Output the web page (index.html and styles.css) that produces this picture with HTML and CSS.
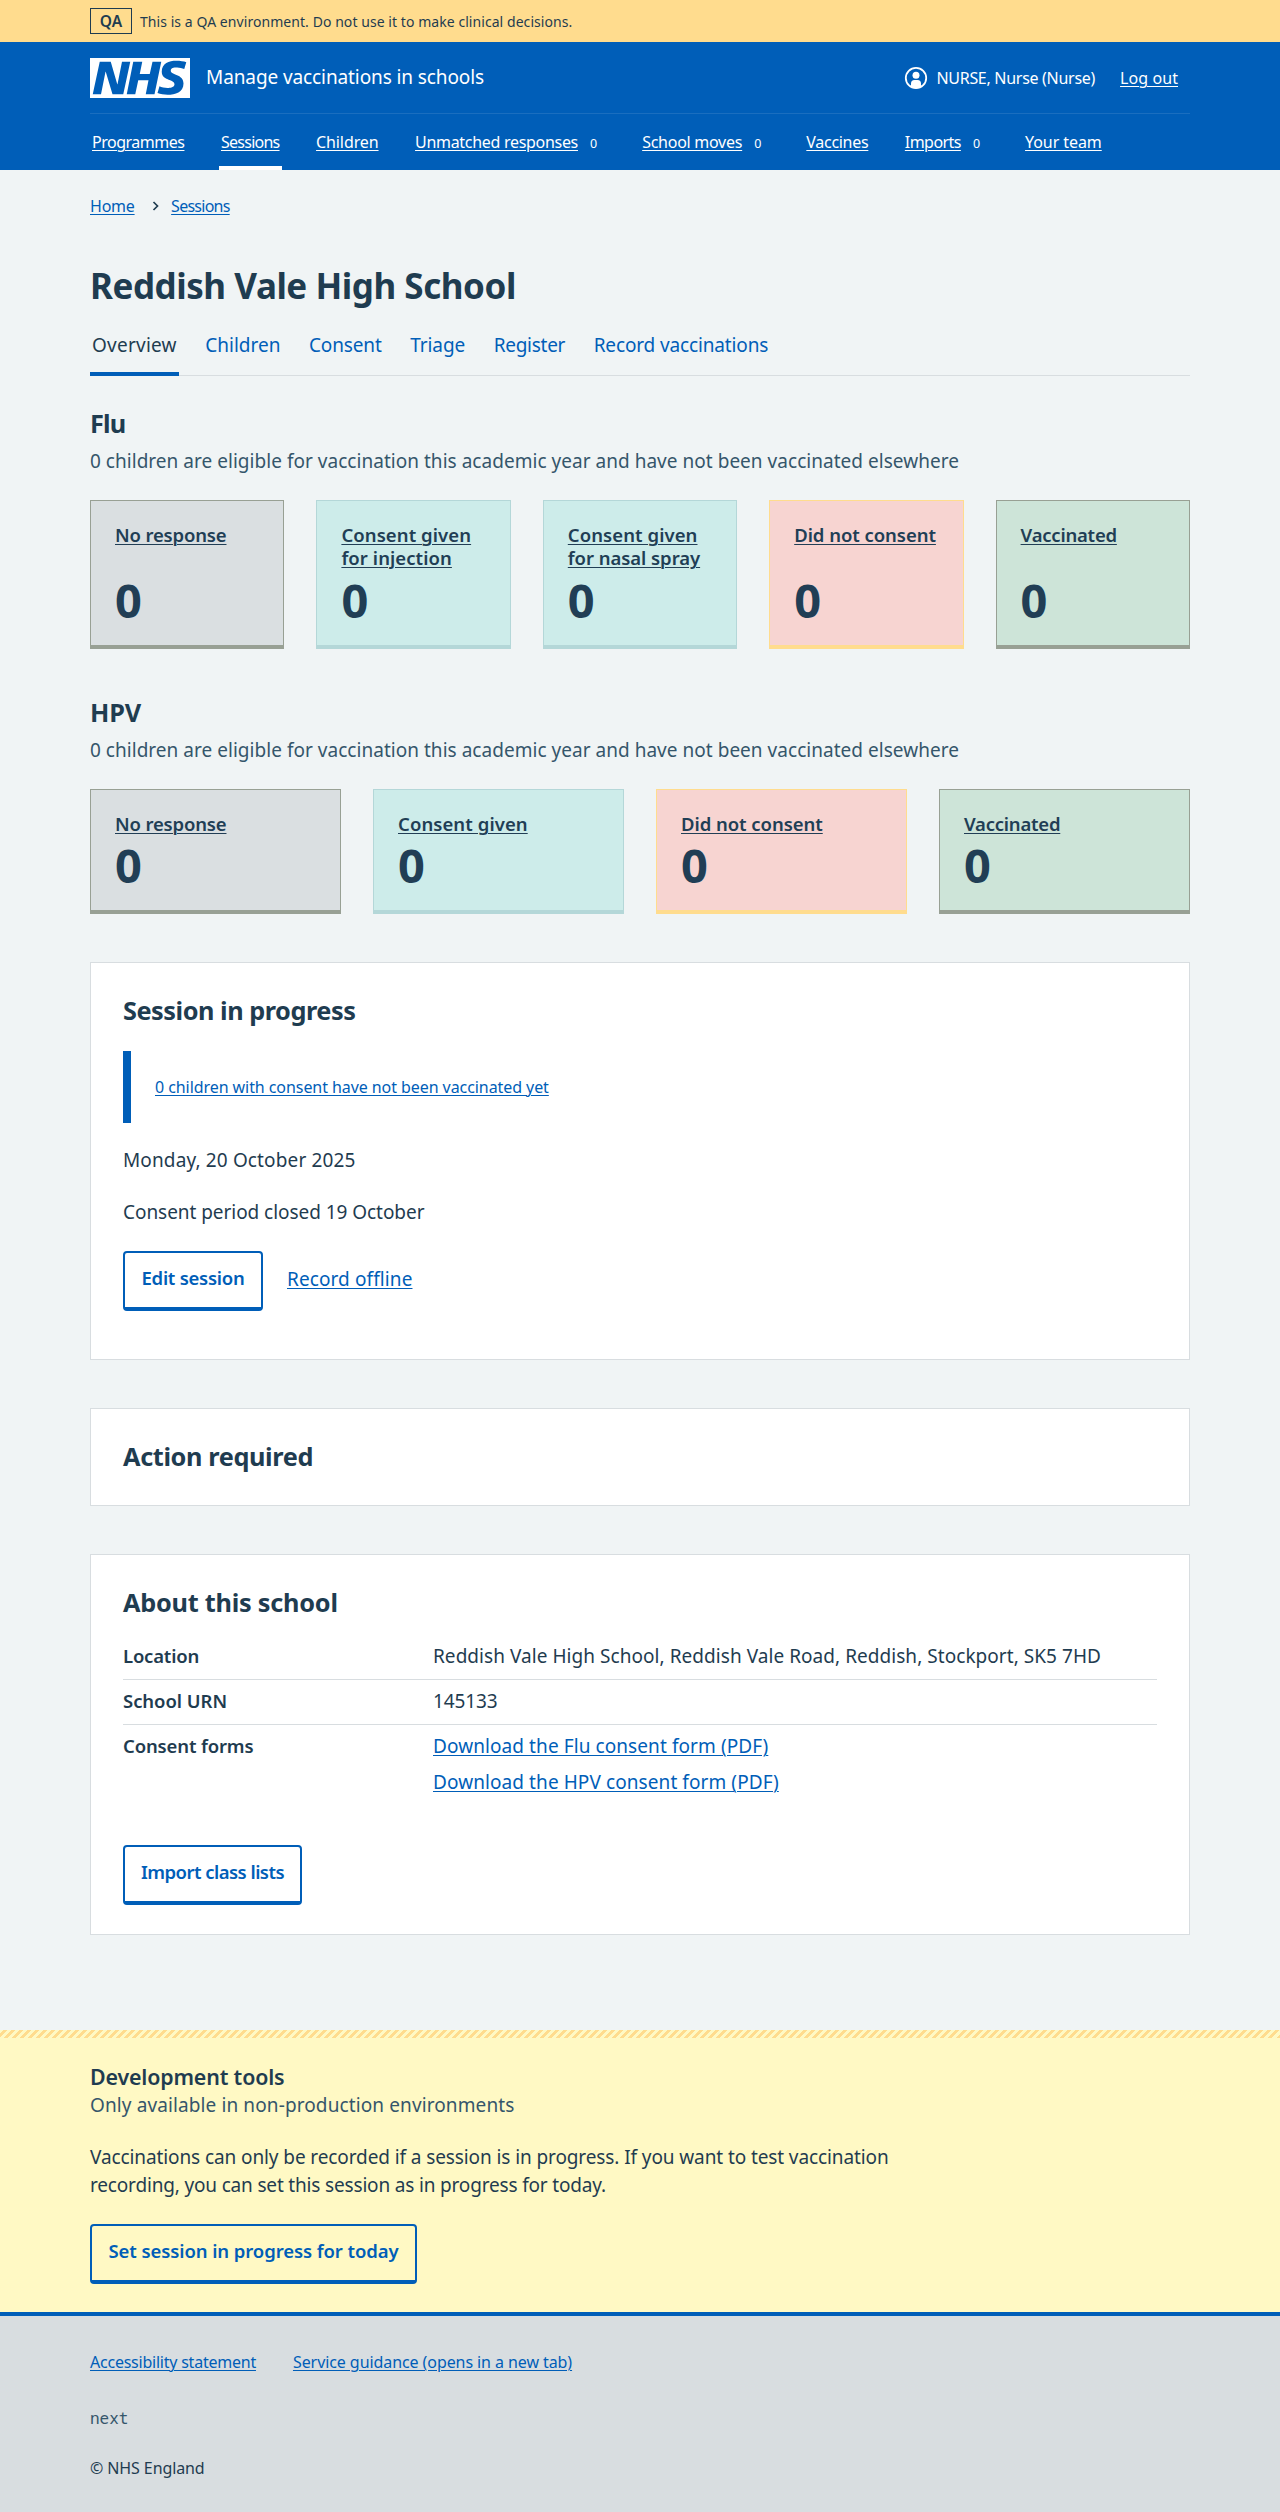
FILE: index.html
```html
<!DOCTYPE html>
<html lang="en">
<head>
<meta charset="utf-8">
<title>Reddish Vale High School – Manage vaccinations in schools</title>
<link rel="stylesheet" href="styles.css">
</head>
<body>
<div class="env"><div class="container env-in"><strong class="env-tag">QA</strong><span class="env-text">This is a QA environment. Do not use it to make clinical decisions.</span></div></div>
<header class="header">
  <div class="container">
    <div class="header-top">
      <svg class="logo" viewBox="0 0 200 80" width="100" height="40" role="img" aria-label="NHS"><path fill="#fff" d="M200 0v80H0V0h200Zm-27.5 5.5c-14.5 0-29 5-29 22 0 10.2 7.7 13.5 14.7 16.3l.7.3c5.4 2 10.1 3.9 10.1 8.4 0 6.5-8.5 7.5-14 7.5s-12.5-1.5-16-3.5L135 70c5.5 2 13.5 3.5 20 3.5 15.5 0 32-4.5 32-22.5 0-19.5-25.5-16.5-25.5-25.5 0-5.5 5.5-6.5 12.5-6.5a35 35 0 0 1 14.5 3l4-13.5c-4.5-2-12-3-20-3Zm-131 2h-22l-14 65H22l9-45h.5l13.5 45h21.5l14-65H64l-9 45h-.5l-13-45Zm63 0h-18l-13 65h17l6-28H117l-5.5 28H129l13.5-65H125L119.5 32h-20l5-24.5Z"/></svg>
      <span class="service">Manage vaccinations in schools</span>
      <div class="account">
        <svg class="user" viewBox="0 0 24 24" width="24" height="24" aria-hidden="true"><circle cx="12" cy="12" r="10.2" fill="none" stroke="#fff" stroke-width="1.800"/><circle cx="12" cy="9.300" r="3.500" fill="#fff"/><path fill="#fff" d="M7 21v-3.500a3.500 3.500 0 0 1 3.500-3.500h3a3.500 3.500 0 0 1 3.500 3.500V21a10.500 10.500 0 0 1-10 0Z"/></svg>
        <span class="who">NURSE, Nurse (Nurse)</span><a class="logout">Log out</a>
      </div>
    </div>
    <nav class="nav">
      <a class="programmes"><u>Programmes</u></a><a class="sessions on"><u>Sessions</u></a><a class="children"><u>Children</u></a><a class="unmatched"><u>Unmatched responses</u><i>0</i></a><a class="moves"><u>School moves</u><i>0</i></a><a class="vaccines"><u>Vaccines</u></a><a class="imports"><u>Imports</u><i>0</i></a><a class="team"><u>Your team</u></a>
    </nav>
  </div>
</header>
<div class="container crumbs"><a class="home">Home</a><svg width="7" height="10" viewBox="0 0 7 10" aria-hidden="true"><path d="M1.500 1l4 4-4 4" fill="none" stroke="#1f3c50" stroke-width="1.700"/></svg><a class="sessions">Sessions</a></div>
<main class="container">
  <h1>Reddish Vale High School</h1>
  <div class="tabs"><a class="overview on">Overview</a><a>Children</a><a class="consent">Consent</a><a class="triage">Triage</a><a class="register">Register</a><a class="record">Record vaccinations</a></div>
  <h2 class="flu">Flu</h2>
  <p class="cap">0 children are eligible for vaccination this academic year and have not been vaccinated elsewhere</p>
  <div class="stats five">
    <div class="stat grey"><a>No response</a><b>0</b></div>
    <div class="stat aqua"><a>Consent given <br>for injection</a><b>0</b></div>
    <div class="stat aqua"><a>Consent given <br><span class="nasal">for nasal spray</span></a><b>0</b></div>
    <div class="stat red"><a>Did not consent</a><b>0</b></div>
    <div class="stat green"><a>Vaccinated</a><b>0</b></div>
  </div>
  <h2 class="hpv">HPV</h2>
  <p class="cap">0 children are eligible for vaccination this academic year and have not been vaccinated elsewhere</p>
  <div class="stats four">
    <div class="stat grey"><a>No response</a><b>0</b></div>
    <div class="stat aqua"><a>Consent given</a><b>0</b></div>
    <div class="stat red"><a>Did not consent</a><b>0</b></div>
    <div class="stat green"><a>Vaccinated</a><b>0</b></div>
  </div>
  <section class="card">
    <h2 class="progress">Session in progress</h2>
    <div class="inset"><a>0 children with consent have not been vaccinated yet</a></div>
    <p class="date">Monday, 20 October 2025</p>
    <p class="period">Consent period closed 19 October</p>
    <div class="actions"><button class="btn edit">Edit session</button><a class="offline">Record offline</a></div>
  </section>
  <section class="card"><h2 class="action">Action required</h2></section>
  <section class="card about">
    <h2>About this school</h2>
    <dl>
      <div><dt class="loc">Location</dt><dd class="address">Reddish Vale High School, Reddish Vale Road, Reddish, Stockport, SK5 7HD</dd></div>
      <div><dt class="urn">School URN</dt><dd class="number">145133</dd></div>
      <div><dt class="forms">Consent forms</dt><dd><a>Download the Flu consent form (PDF)</a><a>Download the HPV consent form (PDF)</a></dd></div>
    </dl>
    <button class="btn import">Import class lists</button>
  </section>
</main>
<section class="dev"><div class="container">
  <h3>Development tools</h3>
  <p class="cap">Only available in non-production environments</p>
  <p class="body">Vaccinations can only be recorded if a session is in progress. If you want to test vaccination<br><span class="second">recording, you can set this session as in progress for today.</span></p>
  <button class="btn today">Set session in progress for today</button>
</div></section>
<footer class="footer"><div class="container">
  <div class="links"><a class="access">Accessibility statement</a><a class="guidance">Service guidance (opens in a new tab)</a></div>
  <p class="rel">next</p>
  <p class="copy">© NHS England</p>
</div></footer>
</body>
</html>
```
FILE: styles.css
```css
* { box-sizing: border-box; }
body { margin: 0; background: #f0f4f5; color: #1f3c50; font: 400 19px/28px "Noto Sans", "Open Sans", sans-serif; }
p, h1, h2, h3, dl, dd { margin: 0; }
a, .nav u { text-decoration: underline; text-decoration-thickness: 1px; text-underline-offset: 2px; }
.container { width: 1100px; margin: 0 auto; }

/* Environment banner */
.env { background: #ffdc8e; height: 42px; font-size: 14px; line-height: 26px; }
.env-in { display: flex; align-items: center; height: 42px; gap: 8px; }
.env-tag { border: 1px solid #1f3c50; width: 42px; height: 26px; line-height: 24px; text-align: center; font-size: 15.5px; font-weight: 600; }
.env-text { letter-spacing: .06px; padding-top: 2px; }

/* Header */
.header { background: #005eb8; color: #fff; font-size: 16px; line-height: 24px; }
.header-top { display: flex; align-items: center; height: 72px; border-bottom: 1px solid #1a6ebf; }
.service { font-size: 19px; line-height: 28px; margin: -1px 0 0 16px; letter-spacing: -.1px; }
.account { margin-left: auto; display: flex; align-items: center; padding-right: 12px; }
.user { margin-right: 8px; }
.who { letter-spacing: -.29px; }
.logout { margin-left: 25px; letter-spacing: .08px; }
.nav { display: flex; height: 56px; line-height: 56px; gap: 32.5px; }
.nav a { text-decoration: none; padding: 0 2px; height: 56px; white-space: nowrap; }
.nav i { font-style: normal; font-size: 12.5px; letter-spacing: 0; margin: 0 8.5px 0 12px; }
.nav .on { box-shadow: inset 0 -4px #fff; }
.programmes { letter-spacing: -.49px; }
.sessions { letter-spacing: -.74px; }
.children { letter-spacing: -.1px; }
.unmatched { letter-spacing: -.3px; }
.moves { letter-spacing: -.26px; }
.vaccines { letter-spacing: -.29px; }
.imports { letter-spacing: -.56px; }
.team { letter-spacing: -.07px; }

.crumbs { display: flex; align-items: center; height: 24px; margin-top: 24px; font-size: 16px; line-height: 24px; color: #005eb8; }
.crumbs svg { margin: 0 12.5px 0 17px; }
.home { letter-spacing: -.23px; }

/* Page content */
main { height: 1766px; }
h1 { font-size: 35px; font-weight: 700; line-height: 44px; margin-top: 46px; letter-spacing: -.46px; }
.tabs { display: flex; height: 62px; margin-top: 6px; padding-top: 17px; border-bottom: 1px solid #d8dde0; gap: 24.5px; }
.tabs a { text-decoration: none; color: #005eb8; padding: 0 2px; height: 45px; }
.tabs .on { color: #1f3c50; box-shadow: inset 0 -4px #005eb8; }
.overview { letter-spacing: .24px; }
.consent { letter-spacing: -.14px; }
.triage { letter-spacing: -.07px; }
.register { letter-spacing: -.27px; }
.record { letter-spacing: -.14px; }
h2 { font-size: 25.3px; font-weight: 700; line-height: 32px; margin-top: 31px; letter-spacing: -.25px; }
.flu { letter-spacing: -.9px; }
.hpv { letter-spacing: -.2px; }
.cap { margin-top: 8px; color: #35566b; letter-spacing: .03px; }

.stats { display: grid; gap: 32px; margin-top: 25px; }
.five { grid-template-columns: repeat(5, 1fr); }
.four { grid-template-columns: repeat(4, 1fr); }
.stats + h2 { margin-top: 47px; }
.stat { border: 1px solid; border-bottom-width: 4px; padding: 22px 24px 17px; display: flex; flex-direction: column; font-size: 18.5px; line-height: 23px; font-weight: 600; }
.five .stat { height: 149px; }
.four .stat { height: 125px; }
.stat a, .stat b { color: #213e55; align-self: flex-start; white-space: nowrap; }
.stat b { font-size: 47px; line-height: 56px; font-weight: 700; margin-top: auto; }
.grey { background: #dadfe1; border-color: #98a094; }
.grey a { letter-spacing: -.16px; }
.aqua { background: #cdecea; border-color: #b4d7d8; }
.aqua a { letter-spacing: .08px; }
.nasal { letter-spacing: -.05px; }
.red { background: #f7d4d1; border-color: #ffdc8e; }
.red a { letter-spacing: -.05px; }
.green { background: #cde4d8; border-color: #98a094; }
.green a { letter-spacing: -.22px; }

.card { background: #fff; border: 1px solid #d8dde0; padding: 30px 32px 32px; margin-top: 48px; }
.card h2 { margin: 0; line-height: 34px; }
.card .progress { letter-spacing: -.47px; }
.card .action { letter-spacing: -.38px; }
.card p { margin-bottom: 24px; }
.card a, .footer a { color: #005eb8; }
.inset { border-left: 8px solid #005eb8; margin: 24px 0 23px; padding: 24px; font-size: 16px; line-height: 24px; letter-spacing: -.07px; }
.date { letter-spacing: .13px; }
.period { letter-spacing: -.05px; }
.offline { letter-spacing: .1px; }
.actions { display: flex; gap: 24px; margin: 25px 0 16px; line-height: 56px; }

.btn { display: block; font: 600 18.5px/28px "Noto Sans", sans-serif; height: 60px; border: 2px solid #005eb8; border-bottom-width: 4px; border-radius: 4px; background: #fff; color: #005eb8; padding: 11px 0 15px; text-align: center; white-space: nowrap; }
.edit { width: 140px; letter-spacing: -.26px; }
.import { width: 179px; letter-spacing: -.53px; }
.today { width: 327px; margin-top: 25px; letter-spacing: -.09px; }

.about { height: 381px; }
.about dl { margin-top: 16px; }
.about dl > div { display: flex; height: 45px; border-bottom: 1px solid #d8dde0; padding-top: 7px; }
.about dl > div:last-child { height: 120px; border: 0; }
.about dt { width: 310px; font-weight: 600; font-size: 18.5px; }
.about dd a { display: table; margin-bottom: 8px; letter-spacing: .085px; }
.loc { letter-spacing: -.2px; }
.address { letter-spacing: .05px; }
.urn { letter-spacing: -.05px; }
.number { letter-spacing: -.12px; }
.forms { letter-spacing: -.14px; }

/* Development tools */
.dev { background: #fff9c4; height: 282px; }
.dev::before { content: ""; display: block; height: 8px; background: repeating-linear-gradient(-45deg, #ffdc8e 0 2.83px, #fff9c4 2.83px 5.66px); }
h3 { font-size: 21.4px; font-weight: 600; padding-top: 25px; line-height: 28px; letter-spacing: -.16px; }
.dev .cap { margin: 0; letter-spacing: .11px; }
.body { margin-top: 24px; letter-spacing: -.1px; }
.second { letter-spacing: -.17px; }
.dev .btn { background: #fff9c4; }

.footer { background: #d8dde0; border-top: 4px solid #005eb8; height: 200px; padding-top: 34px; font-size: 16px; line-height: 24px; }
.links { display: flex; gap: 37px; }
.access { letter-spacing: -.23px; }
.guidance { letter-spacing: -.08px; }
.rel { font: 16px/24px "Noto Sans Mono", monospace; margin-top: 32px; color: #35566b; }
.copy { margin-top: 26px; letter-spacing: -.1px; }
```
